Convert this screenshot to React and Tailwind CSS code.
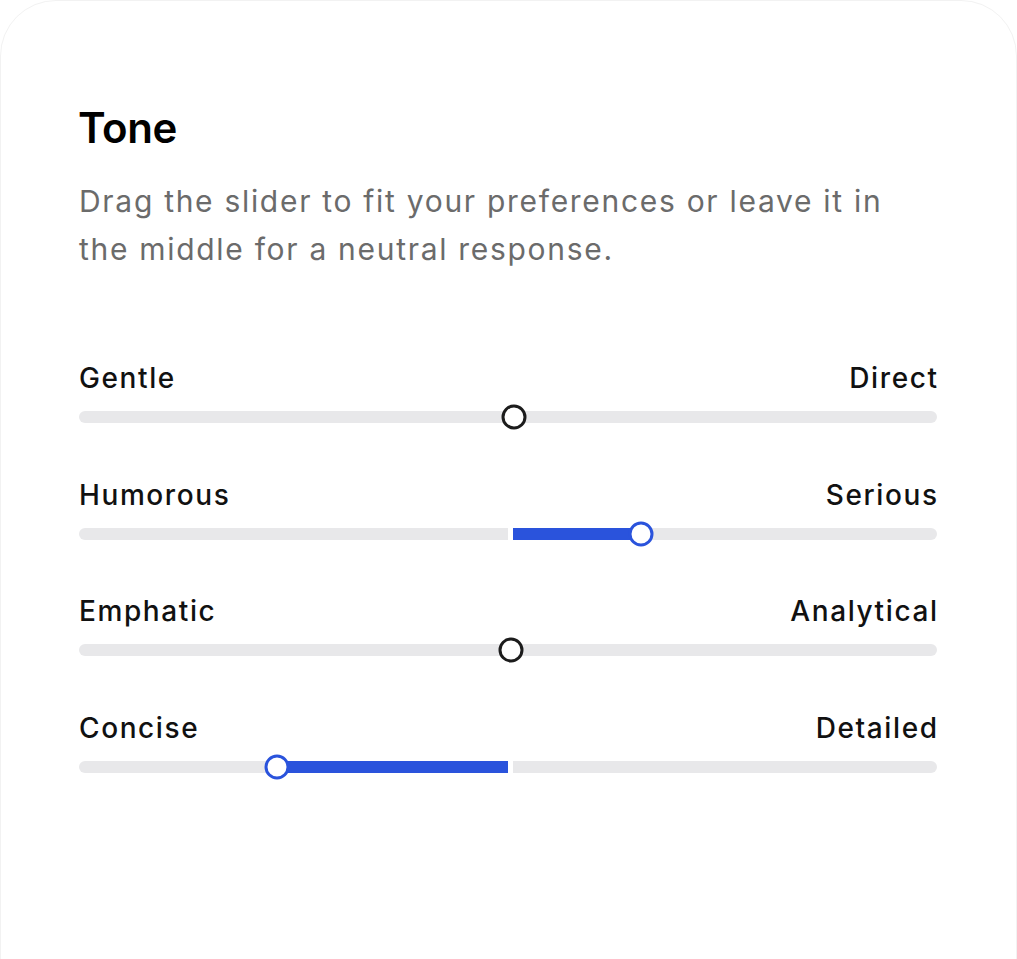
const SLIDERS = [
  { left: 'Gentle', right: 'Direct', value: 435, active: false },
  { left: 'Humorous', right: 'Serious', value: 562, active: true },
  { left: 'Emphatic', right: 'Analytical', value: 432, active: false },
  { left: 'Concise', right: 'Detailed', value: 198, active: true },
];

const TRACK_W = 858;
const MID = 429;
const GAP = 5;

function ToneSlider({ s }) {
  let segs;
  if (!s.active) {
    segs = [{ w: TRACK_W, cls: 'bg-[#e8e8ea] rounded-full' }];
  } else if (s.value > MID) {
    segs = [
      { w: MID, cls: 'bg-[#e8e8ea] rounded-l-full' },
      { w: GAP, cls: 'bg-white' },
      { w: s.value - MID - GAP, cls: 'bg-[#2a53dc]' },
      { w: TRACK_W - s.value, cls: 'bg-[#e8e8ea] rounded-r-full' },
    ];
  } else {
    segs = [
      { w: s.value, cls: 'bg-[#e8e8ea] rounded-l-full' },
      { w: MID - s.value, cls: 'bg-[#2a53dc]' },
      { w: GAP, cls: 'bg-white' },
      { w: TRACK_W - MID - GAP, cls: 'bg-[#e8e8ea] rounded-r-full' },
    ];
  }
  return (
    <div className="flex flex-col gap-[15px]">
      <div className="flex justify-between text-[28px] leading-[36px] font-medium tracking-[1.6px] text-[#111]">
        <span>{s.left}</span>
        <span className="-mr-[1.6px]">{s.right}</span>
      </div>
      <div className="relative flex h-[12px] w-[858px]">
        {segs.map((g, i) => (
          <div key={i} className={`h-full ${g.cls}`} style={{ width: g.w }} />
        ))}
        <div
          className={`absolute top-1/2 h-[25px] w-[25px] -translate-x-1/2 -translate-y-1/2 rounded-full border-[3px] bg-white ${
            s.active ? 'border-[#2a53dc]' : 'border-[#1c1c1c]'
          }`}
          style={{ left: s.value }}
        />
      </div>
    </div>
  );
}

export default function App() {
  return (
    <div className="min-h-screen bg-white" style={{ fontFamily: 'Inter, "Noto Sans", sans-serif' }}>
      <div className="h-[1100px] rounded-[56px] border border-[#f2f2f2] bg-white pt-[102px] pl-[78px] pr-[78px]">
        <h1 className="-ml-px text-[42px] leading-[50px] font-semibold text-black tracking-[-0.01em]">Tone</h1>
        <p className="mt-[24px] w-[840px] text-[30px] leading-[48px] tracking-[1.7px] text-[#6b6b6b]">
          Drag the slider to fit your preferences or leave it in the middle for a neutral response.
        </p>
        <div className="mt-[87px] flex w-[858px] flex-col gap-[53.5px]">
          {SLIDERS.map((s) => (
            <ToneSlider key={s.left} s={s} />
          ))}
        </div>
      </div>
    </div>
  );
}
